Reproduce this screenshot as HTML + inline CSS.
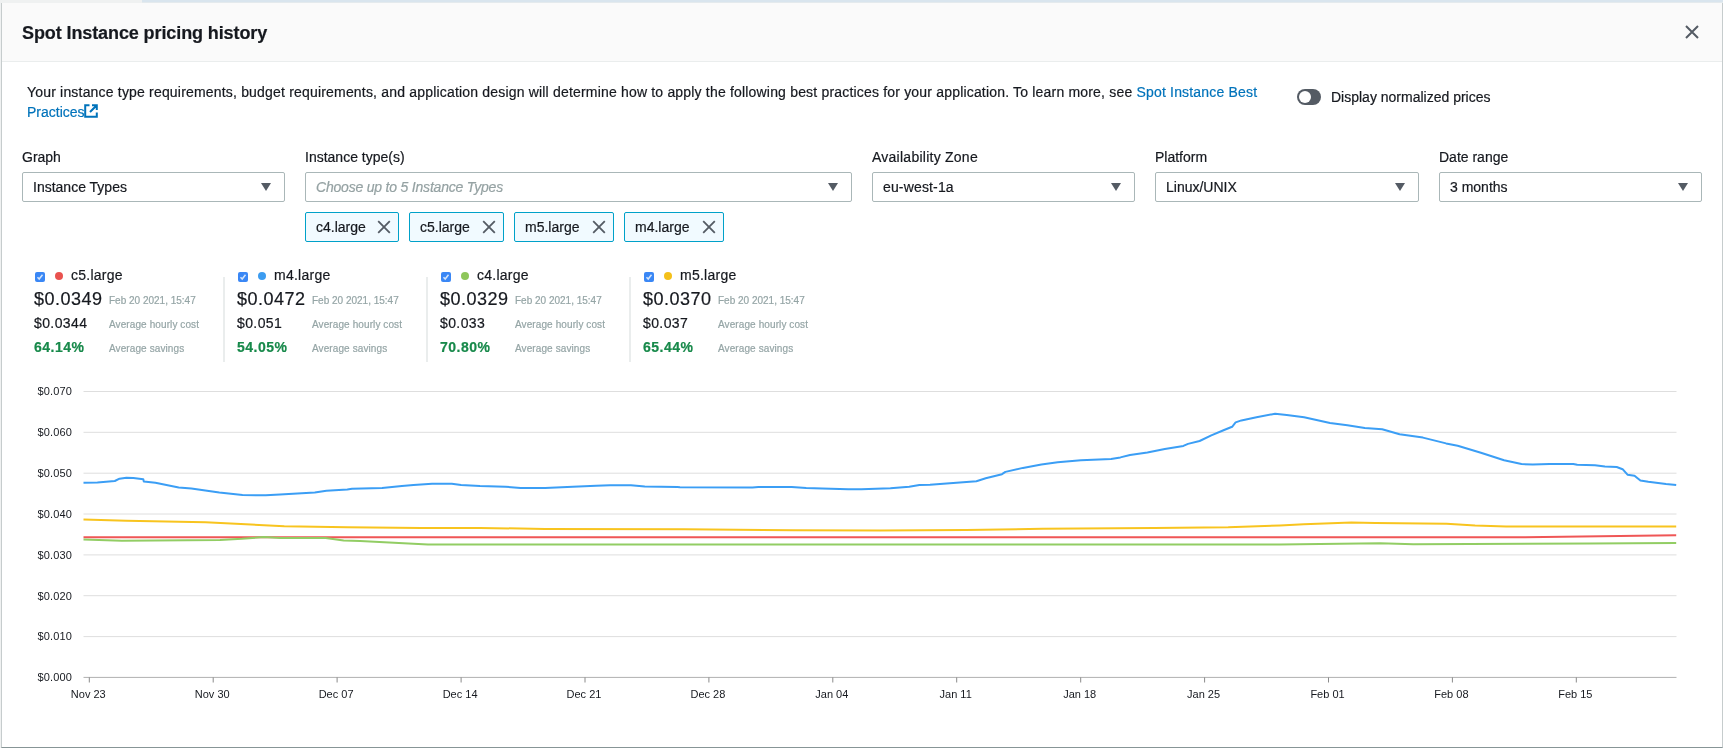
<!DOCTYPE html>
<html><head><meta charset="utf-8">
<style>
*{box-sizing:border-box;margin:0;padding:0}
html,body{width:1723px;height:748px;overflow:hidden;background:#eff1f1;font-family:"Liberation Sans",sans-serif;color:#16191f;-webkit-text-stroke:0.2px currentColor}
.strip{position:absolute;left:142px;top:0;width:1581px;height:3px;background:#d9e5ee;border-bottom:1px solid #e4eaed}
.modal{position:absolute;left:1px;top:3px;width:1722px;height:745px;background:#fff;border-left:1px solid #c6cccd;border-right:1px solid #c6cccd;border-bottom:1px solid #879596}
.hdr{position:absolute;left:0;top:0;right:0;height:59px;background:#fafafa;border-bottom:1px solid #eaeded}
.abs{position:absolute;white-space:nowrap}
.title{font-size:18px;font-weight:bold;left:22px;top:23px;letter-spacing:-0.1px}
.lbl{font-size:14px;color:#16191f}
.sel{position:absolute;height:30px;border:1px solid #aab7b8;border-radius:2px;background:#fff}
.sel span{position:absolute;left:10px;top:6px;font-size:14px}
.caret{position:absolute;right:13px;top:10px;width:0;height:0;border-left:5.5px solid transparent;border-right:5.5px solid transparent;border-top:8px solid #545b64}
.tok{position:absolute;top:212px;height:30px;border:1px solid #00a1c9;border-radius:2px;background:#f1faff}
.tok span{position:absolute;left:10px;top:6px;font-size:14px}
.link{color:#0073bb}
.tx{position:absolute;right:7px;top:7px}
.ext{display:inline-block;vertical-align:top}
.leg{position:absolute;top:265px;width:190px;height:100px}
.leg *{position:absolute;white-space:nowrap}
.cb{left:1px;top:7px;width:10px;height:10px;border-radius:2px;background:#3a87f5}
.dot{left:21px;top:7px;width:8px;height:8px;border-radius:4px}
.nm{left:37px;top:2px;font-size:14px;letter-spacing:0.25px}
.big{left:0;top:24px;font-size:18px;letter-spacing:0.5px}
.dt{left:75px;top:30px;font-size:10px;color:#95a5a6}
.avg{left:0;top:50px;font-size:14px;letter-spacing:0.4px}
.sub{left:75px;font-size:10px;color:#95a5a6;letter-spacing:0.1px}
.pct{left:0;top:74px;font-size:14px;font-weight:bold;color:#17894a;letter-spacing:0.5px}
.vdiv{position:absolute;top:277px;width:2px;height:85px;background:#eaeded}
.yl{font-size:11px;letter-spacing:0.15px;fill:#16191f;font-family:"Liberation Sans",sans-serif}
.xl{font-size:11px;fill:#16191f;font-family:"Liberation Sans",sans-serif}
</style></head><body><div id="wrap" style="position:absolute;left:0;top:0;width:1723px;height:748px;will-change:transform">
<div class="strip"></div>
<div class="modal">
  <div class="hdr"></div>
</div>
<div class="abs title">Spot Instance pricing history</div>
<svg class="abs" style="left:1685px;top:25px" width="14" height="14" viewBox="0 0 14 14"><path d="M1 1L13 13M13 1L1 13" stroke="#545b64" stroke-width="2"/></svg>

<div class="abs lbl" style="left:27px;top:82px;line-height:20px;letter-spacing:0.185px">Your instance type requirements, budget requirements, and application design will determine how to apply the following best practices for your application. To learn more, see <span class="link">Spot Instance Best</span><br><span class="link" style="letter-spacing:0">Practices<svg class="ext" style="margin-top:2px;margin-left:-1px" width="14" height="14" viewBox="0 0 14 14"><path d="M5.5 1.2H1.2V12.8H12.8V8.5M8 1.2H12.8V6M12.8 1.2L6 8" fill="none" stroke="#0073bb" stroke-width="2"/></svg></span></div>

<div class="abs" style="left:1297px;top:89px;width:24px;height:16px;border-radius:8px;background:#545b64"></div>
<div class="abs" style="left:1299px;top:91px;width:12px;height:12px;border-radius:6px;background:#fff"></div>
<div class="abs lbl" style="left:1331px;top:89px">Display normalized prices</div>

<div class="abs lbl" style="left:22px;top:149px">Graph</div>
<div class="abs lbl" style="left:305px;top:149px">Instance type(s)</div>
<div class="abs lbl" style="left:872px;top:149px;letter-spacing:0.25px">Availability Zone</div>
<div class="abs lbl" style="left:1155px;top:149px">Platform</div>
<div class="abs lbl" style="left:1439px;top:149px">Date range</div>

<div class="sel" style="left:22px;top:172px;width:263px"><span>Instance Types</span><i class="caret"></i></div>
<div class="sel" style="left:305px;top:172px;width:547px"><span style="font-style:italic;color:#95a2a3;letter-spacing:-0.2px">Choose up to 5 Instance Types</span><i class="caret"></i></div>
<div class="sel" style="left:872px;top:172px;width:263px"><span style="letter-spacing:0.15px">eu-west-1a</span><i class="caret"></i></div>
<div class="sel" style="left:1155px;top:172px;width:264px"><span>Linux/UNIX</span><i class="caret"></i></div>
<div class="sel" style="left:1439px;top:172px;width:263px"><span>3 months</span><i class="caret"></i></div>

<div class="tok" style="left:305px;width:94px"><span>c4.large</span><svg class="tx" width="14" height="14" viewBox="0 0 14 14"><path d="M1.2 1.2L12.8 12.8M12.8 1.2L1.2 12.8" stroke="#545b64" stroke-width="1.8"/></svg></div>
<div class="tok" style="left:409px;width:95px"><span>c5.large</span><svg class="tx" width="14" height="14" viewBox="0 0 14 14"><path d="M1.2 1.2L12.8 12.8M12.8 1.2L1.2 12.8" stroke="#545b64" stroke-width="1.8"/></svg></div>
<div class="tok" style="left:514px;width:100px"><span>m5.large</span><svg class="tx" width="14" height="14" viewBox="0 0 14 14"><path d="M1.2 1.2L12.8 12.8M12.8 1.2L1.2 12.8" stroke="#545b64" stroke-width="1.8"/></svg></div>
<div class="tok" style="left:624px;width:100px"><span>m4.large</span><svg class="tx" width="14" height="14" viewBox="0 0 14 14"><path d="M1.2 1.2L12.8 12.8M12.8 1.2L1.2 12.8" stroke="#545b64" stroke-width="1.8"/></svg></div>

<!--LEGEND-->
<div class="leg" style="left:34px"><i class="cb"><svg width="10" height="10" viewBox="0 0 10 10" style="position:absolute;left:0;top:0"><path d="M2.5 5.2L4.2 7L7.5 2.8" fill="none" stroke="#d6e6fb" stroke-width="1.5"/></svg></i><i class="dot" style="background:#e9524f"></i><span class="nm">c5.large</span>
<span class="big">$0.0349</span><span class="dt">Feb 20 2021, 15:47</span>
<span class="avg">$0.0344</span><span class="sub" style="top:54px">Average hourly cost</span>
<span class="pct">64.14%</span><span class="sub" style="top:78px">Average savings</span></div>
<div class="vdiv" style="left:223px"></div>
<div class="leg" style="left:237px"><i class="cb"><svg width="10" height="10" viewBox="0 0 10 10" style="position:absolute;left:0;top:0"><path d="M2.5 5.2L4.2 7L7.5 2.8" fill="none" stroke="#d6e6fb" stroke-width="1.5"/></svg></i><i class="dot" style="background:#3c9cf0"></i><span class="nm">m4.large</span>
<span class="big">$0.0472</span><span class="dt">Feb 20 2021, 15:47</span>
<span class="avg">$0.051</span><span class="sub" style="top:54px">Average hourly cost</span>
<span class="pct">54.05%</span><span class="sub" style="top:78px">Average savings</span></div>
<div class="vdiv" style="left:426px"></div>
<div class="leg" style="left:440px"><i class="cb"><svg width="10" height="10" viewBox="0 0 10 10" style="position:absolute;left:0;top:0"><path d="M2.5 5.2L4.2 7L7.5 2.8" fill="none" stroke="#d6e6fb" stroke-width="1.5"/></svg></i><i class="dot" style="background:#8ec65a"></i><span class="nm">c4.large</span>
<span class="big">$0.0329</span><span class="dt">Feb 20 2021, 15:47</span>
<span class="avg">$0.033</span><span class="sub" style="top:54px">Average hourly cost</span>
<span class="pct">70.80%</span><span class="sub" style="top:78px">Average savings</span></div>
<div class="vdiv" style="left:629px"></div>
<div class="leg" style="left:643px"><i class="cb"><svg width="10" height="10" viewBox="0 0 10 10" style="position:absolute;left:0;top:0"><path d="M2.5 5.2L4.2 7L7.5 2.8" fill="none" stroke="#d6e6fb" stroke-width="1.5"/></svg></i><i class="dot" style="background:#f4c01a"></i><span class="nm">m5.large</span>
<span class="big">$0.0370</span><span class="dt">Feb 20 2021, 15:47</span>
<span class="avg">$0.037</span><span class="sub" style="top:54px">Average hourly cost</span>
<span class="pct">65.44%</span><span class="sub" style="top:78px">Average savings</span></div>
<svg class="abs" style="left:0;top:0" width="1723" height="748" viewBox="0 0 1723 748">
<line x1="83.5" x2="1676.5" y1="391.5" y2="391.5" stroke="#dedede" stroke-width="1"/>
<text x="72" y="395.3" text-anchor="end" class="yl">$0.070</text>
<line x1="83.5" x2="1676.5" y1="432.3" y2="432.3" stroke="#dedede" stroke-width="1"/>
<text x="72" y="436.1" text-anchor="end" class="yl">$0.060</text>
<line x1="83.5" x2="1676.5" y1="473.2" y2="473.2" stroke="#dedede" stroke-width="1"/>
<text x="72" y="477.0" text-anchor="end" class="yl">$0.050</text>
<line x1="83.5" x2="1676.5" y1="514.0" y2="514.0" stroke="#dedede" stroke-width="1"/>
<text x="72" y="517.8" text-anchor="end" class="yl">$0.040</text>
<line x1="83.5" x2="1676.5" y1="554.9" y2="554.9" stroke="#dedede" stroke-width="1"/>
<text x="72" y="558.7" text-anchor="end" class="yl">$0.030</text>
<line x1="83.5" x2="1676.5" y1="595.7" y2="595.7" stroke="#dedede" stroke-width="1"/>
<text x="72" y="599.5" text-anchor="end" class="yl">$0.020</text>
<line x1="83.5" x2="1676.5" y1="636.6" y2="636.6" stroke="#dedede" stroke-width="1"/>
<text x="72" y="640.4" text-anchor="end" class="yl">$0.010</text>
<text x="72" y="681.2" text-anchor="end" class="yl">$0.000</text>
<line x1="83.5" x2="1676.5" y1="677.4" y2="677.4" stroke="#b0b0b0" stroke-width="1"/>
<line x1="89.3" x2="89.3" y1="677.4" y2="682.5" stroke="#8a8a8a" stroke-width="1"/>
<text x="88.3" y="698" text-anchor="middle" class="xl">Nov 23</text>
<line x1="213.2" x2="213.2" y1="677.4" y2="682.5" stroke="#8a8a8a" stroke-width="1"/>
<text x="212.2" y="698" text-anchor="middle" class="xl">Nov 30</text>
<line x1="337.1" x2="337.1" y1="677.4" y2="682.5" stroke="#8a8a8a" stroke-width="1"/>
<text x="336.1" y="698" text-anchor="middle" class="xl">Dec 07</text>
<line x1="461.1" x2="461.1" y1="677.4" y2="682.5" stroke="#8a8a8a" stroke-width="1"/>
<text x="460.1" y="698" text-anchor="middle" class="xl">Dec 14</text>
<line x1="585.0" x2="585.0" y1="677.4" y2="682.5" stroke="#8a8a8a" stroke-width="1"/>
<text x="584.0" y="698" text-anchor="middle" class="xl">Dec 21</text>
<line x1="708.9" x2="708.9" y1="677.4" y2="682.5" stroke="#8a8a8a" stroke-width="1"/>
<text x="707.9" y="698" text-anchor="middle" class="xl">Dec 28</text>
<line x1="832.8" x2="832.8" y1="677.4" y2="682.5" stroke="#8a8a8a" stroke-width="1"/>
<text x="831.8" y="698" text-anchor="middle" class="xl">Jan 04</text>
<line x1="956.7" x2="956.7" y1="677.4" y2="682.5" stroke="#8a8a8a" stroke-width="1"/>
<text x="955.7" y="698" text-anchor="middle" class="xl">Jan 11</text>
<line x1="1080.7" x2="1080.7" y1="677.4" y2="682.5" stroke="#8a8a8a" stroke-width="1"/>
<text x="1079.7" y="698" text-anchor="middle" class="xl">Jan 18</text>
<line x1="1204.6" x2="1204.6" y1="677.4" y2="682.5" stroke="#8a8a8a" stroke-width="1"/>
<text x="1203.6" y="698" text-anchor="middle" class="xl">Jan 25</text>
<line x1="1328.5" x2="1328.5" y1="677.4" y2="682.5" stroke="#8a8a8a" stroke-width="1"/>
<text x="1327.5" y="698" text-anchor="middle" class="xl">Feb 01</text>
<line x1="1452.4" x2="1452.4" y1="677.4" y2="682.5" stroke="#8a8a8a" stroke-width="1"/>
<text x="1451.4" y="698" text-anchor="middle" class="xl">Feb 08</text>
<line x1="1576.3" x2="1576.3" y1="677.4" y2="682.5" stroke="#8a8a8a" stroke-width="1"/>
<text x="1575.3" y="698" text-anchor="middle" class="xl">Feb 15</text>
<polyline fill="none" stroke="#ef5656" stroke-width="2" stroke-linejoin="round" points="83.5,537.3 1525.1,537.3 1676.2,535.2"/>
<polyline fill="none" stroke="#92cd64" stroke-width="2" stroke-linejoin="round" points="83.5,539.4 121.8,540.8 220.0,540.0 242.0,538.8 264.0,537.0 280.2,538.0 325.7,538.0 343.6,540.4 360.0,540.9 428.0,544.5 1280.0,544.4 1380.0,543.3 1413.3,544.2 1589.3,543.5 1676.2,543.0"/>
<polyline fill="none" stroke="#f8c41f" stroke-width="2" stroke-linejoin="round" points="83.5,519.4 126.4,520.8 205.4,522.2 284.3,526.2 347.0,527.3 421.3,528.0 480.0,527.9 545.0,529.0 684.3,529.2 793.4,530.3 880.0,530.4 965.9,530.0 1042.5,528.8 1153.9,527.9 1228.2,527.2 1280.0,525.5 1303.8,524.2 1351.4,522.5 1375.2,523.0 1446.6,523.7 1475.1,525.6 1506.0,526.6 1676.2,526.6"/>
<polyline fill="none" stroke="#3b9ef5" stroke-width="2" stroke-linejoin="round" points="83.5,482.8 97.4,482.5 114.8,481.0 119.5,478.7 126.4,477.7 133.4,478.1 143.3,479.3 143.8,481.6 155.4,482.8 178.7,487.6 191.4,488.6 219.3,492.6 242.5,495.0 265.7,495.3 280.0,494.5 314.8,492.4 326.4,490.7 347.3,489.5 352.0,488.7 382.1,488.0 401.9,486.0 413.5,484.9 432.1,483.7 451.8,483.7 461.1,484.9 480.0,486.0 505.5,486.7 520.6,487.9 545.0,487.9 572.9,486.7 596.1,485.8 610.0,485.2 630.9,485.2 644.8,486.4 677.3,487.0 680.0,487.2 752.5,487.4 758.4,487.0 791.7,487.0 806.2,487.9 822.2,488.4 848.3,489.2 861.4,489.2 890.4,488.2 909.2,486.7 919.4,485.0 930.0,484.8 953.2,482.9 976.4,481.2 985.7,478.3 1002.0,474.2 1005.4,471.9 1022.9,467.9 1041.4,464.4 1057.7,462.3 1080.9,460.3 1111.1,458.9 1120.4,457.4 1130.0,455.0 1147.4,452.6 1164.8,449.1 1183.4,445.9 1188.0,443.9 1199.6,441.0 1211.3,435.4 1222.9,430.5 1232.1,426.8 1235.6,422.4 1241.4,420.4 1256.5,417.2 1275.1,413.7 1286.7,414.9 1304.1,417.2 1330.0,423.0 1347.4,425.2 1364.8,428.0 1382.2,429.2 1399.6,434.2 1422.9,437.6 1446.1,443.4 1457.7,445.8 1480.9,452.7 1504.1,460.3 1521.5,464.0 1532.8,464.6 1549.6,464.0 1573.3,464.0 1577.2,464.8 1595.0,465.3 1604.9,466.6 1616.7,467.0 1622.6,469.2 1627.5,474.7 1634.5,475.7 1640.4,480.6 1648.3,481.8 1666.0,484.0 1676.2,485.0"/>
</svg>

</div></body></html>
